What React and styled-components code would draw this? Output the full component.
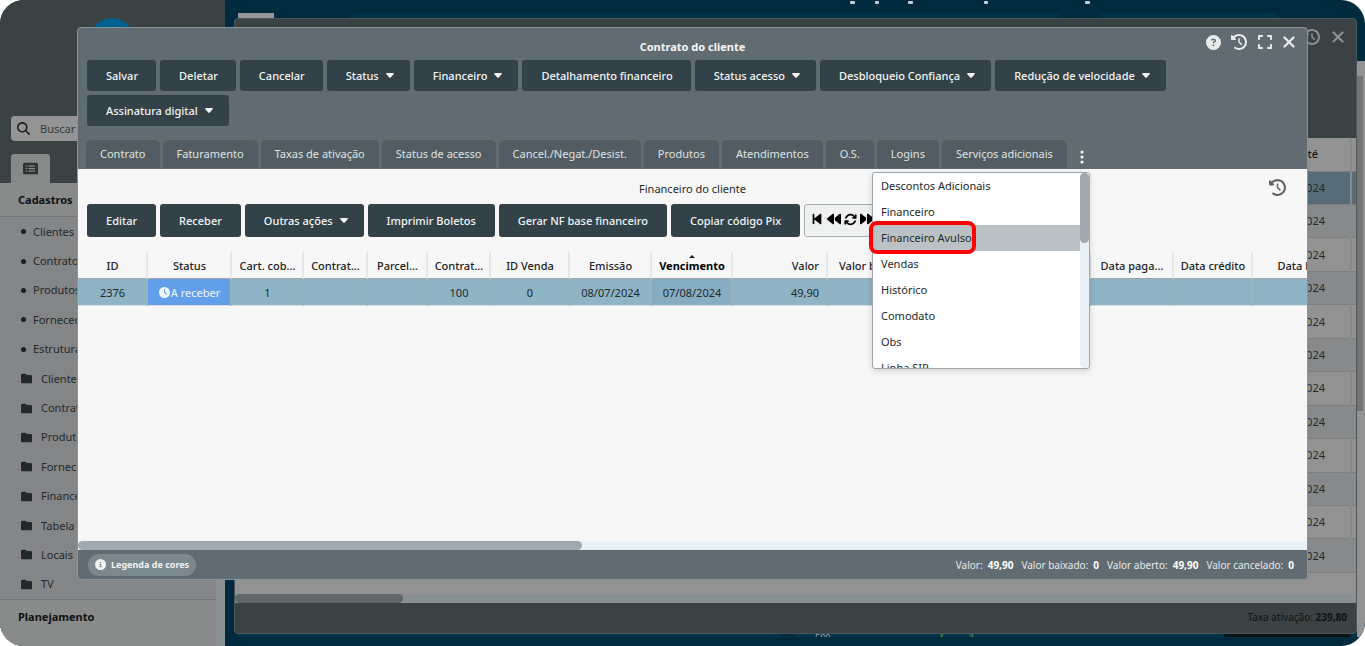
import React from 'react';
import styled, { createGlobalStyle } from 'styled-components';
import {
    FaArrowsRotate,
    FaBackward,
    FaBackwardStep,
    FaCircleInfo,
    FaCircleQuestion,
    FaClock,
    FaClockRotateLeft,
    FaExpand,
    FaFolder,
    FaForward,
    FaForwardStep,
    FaMagnifyingGlass,
    FaRectangleList,
} from 'react-icons/fa6';

const menuLinks = ['Clientes', 'Contratos', 'Produtos', 'Fornecedores', 'Estrutura'];
const menuFolders = ['Clientes', 'Contratos', 'Produtos', 'Fornecedores', 'Financeiro', 'Tabela', 'Locais', 'TV'];

const contractActions = [
    { label: 'Salvar' },
    { label: 'Deletar' },
    { label: 'Cancelar' },
    { label: 'Status', menu: true },
    { label: 'Financeiro', menu: true },
    { label: 'Detalhamento financeiro' },
    { label: 'Status acesso', menu: true },
    { label: 'Desbloqueio Confiança', menu: true },
    { label: 'Redução de velocidade', menu: true },
    { label: 'Assinatura digital', menu: true },
];

const financeActions = [
    { label: 'Editar' },
    { label: 'Receber' },
    { label: 'Outras ações', menu: true },
    { label: 'Imprimir Boletos' },
    { label: 'Gerar NF base financeiro' },
    { label: 'Copiar código Pix' },
];

const tabs = [
    'Contrato', 'Faturamento', 'Taxas de ativação', 'Status de acesso', 'Cancel./Negat./Desist.',
    'Produtos', 'Atendimentos', 'O.S.', 'Logins', 'Serviços adicionais',
];

const moreTabs = [
    'Descontos Adicionais', 'Financeiro', 'Financeiro Avulso', 'Vendas',
    'Histórico', 'Comodato', 'Obs', 'Linha SIP',
];

const columns = [
    { label: 'ID', width: 70, value: '2376' },
    { label: 'Status', width: 84, status: true, value: 'A receber' },
    { label: 'Cart. cob...', width: 72, value: '1' },
    { label: 'Contrat...', width: 64, value: '' },
    { label: 'Parcel...', width: 60, value: '' },
    { label: 'Contrat...', width: 63, value: '100' },
    { label: 'ID Venda', width: 79, value: '0' },
    { label: 'Emissão', width: 82, value: '08/07/2024' },
    { label: 'Vencimento', width: 81, value: '07/08/2024', sorted: true },
    { label: 'Valor', width: 95, value: '49,90', align: 'right' },
    { label: 'Valor baixado', width: 92, value: '', align: 'right' },
    { label: '', width: 91, value: '' },
    { label: '', width: 80, value: '' },
    { label: 'Data paga...', width: 83, value: '' },
    { label: 'Data crédito', width: 79, value: '' },
    { label: 'Data baixa', width: 106, value: '' },
];

const totals = [
    ['Valor:', '49,90'],
    ['Valor baixado:', '0'],
    ['Valor aberto:', '49,90'],
    ['Valor cancelado:', '0'],
];

const GlobalStyle = createGlobalStyle`
    * { box-sizing: border-box; }
    body {
        margin: 0;
        background: #fff;
        font-family: 'Noto Sans', 'Open Sans', sans-serif;
        font-size: 11px;
        line-height: 16px;
        color: #21292c;
    }
    button, input {
        font: inherit;
        color: inherit;
        border: 0;
        margin: 0;
        padding: 0;
        background: none;
    }
    ul { list-style: none; margin: 0; padding: 0; }
    h1, h2 { margin: 0; font-size: 11px; line-height: 16px; }
    a { color: inherit; text-decoration: none; }
    svg { display: block; }
`;

const Page = styled.div`
    position: relative;
    display: flex;
    min-height: 100vh;
    overflow: hidden;
    border-radius: 24px;
    background: #002a3e;
`;

const Sidebar = styled.aside`
    display: flex;
    flex-direction: column;
    flex: 0 0 225px;
    background: #3b4244;
`;

const Brand = styled.div`
    height: 116px;
    padding: 18px 0 0 90px;
`;

const BrandMark = styled.div`
    width: 44px;
    height: 44px;
    border-radius: 50%;
    background: #00618e;
`;

const Search = styled.label`
    display: flex;
    align-items: center;
    gap: 10px;
    height: 25px;
    margin: 0 11px;
    padding: 0 6px;
    border-radius: 4px;
    background: #949494;
    color: #1a2123;

    input {
        min-width: 0;
        flex: 1;
        &::placeholder { color: #32393b; opacity: 1; }
    }
`;

const MenuTab = styled.button`
    display: flex;
    align-items: center;
    justify-content: center;
    width: 39px;
    height: 29px;
    margin: 13px 0 0 11px;
    border-radius: 3px 3px 0 0;
    background: #878a89;
    color: #2c3335;
`;

const MenuBody = styled.nav`
    display: flex;
    flex-direction: column;
    flex: 1;
    padding-right: 9px;
    background: #8a9193;
`;

const MenuTitle = styled.h2`
    height: ${({ $tall }) => ($tall ? 47 : 34)}px;
    padding: 9px 18px;
    background: #898b8a;
    color: #0d1112;
    border-${({ $tall }) => ($tall ? 'top' : 'bottom')}: 1px solid #737678;
`;

const MenuList = styled.ul`
    display: flex;
    flex-direction: column;
    flex: 1;
    background: #848587;
`;

const MenuItem = styled.li`
    display: flex;
    flex: 1;

    a {
        display: flex;
        align-items: center;
        gap: ${({ $folder }) => ($folder ? 9 : 7)}px;
        padding-left: 21px;
    }
`;

const Bullet = styled.span`
    width: 5px;
    height: 5px;
    border-radius: 50%;
    background: #182022;
`;

const Dashboard = styled.main`
    position: relative;
    display: flex;
    flex: 1;
    flex-direction: column;
    justify-content: space-between;
    padding: 13px 8px 9px 13px;
`;

const DashRow = styled.div`
    display: flex;
    gap: 26px;
    height: 30px;
    padding-right: 73px;
`;

const DashChip = styled.div`
    width: 36px;
    height: 10px;
    margin-right: 44px;
    background: #969696;
`;

const DashCard = styled.div`
    flex: ${({ $grow }) => $grow};
    border-radius: 18px;
    background: #00334a;
`;

const ChartStrip = styled.div`
    display: flex;
    height: 8px;
    background: #00334a;
    overflow: hidden;

    svg { width: 100%; height: 8px; }
`;

const TopMarks = styled.svg`
    position: absolute;
    top: 0;
    left: 620px;
`;

const PageScroll = styled.div`
    position: absolute;
    top: 61px;
    right: 0;
    bottom: 9px;
    width: 8px;
    padding: 15px 2px 15px 0;
    background: #929292;
`;

const PageThumb = styled.div`
    height: 335px;
    background: #747474;
`;

const Window = styled.section`
    position: absolute;
    display: flex;
    flex-direction: column;
    overflow: hidden;
    border: 1px solid ${({ $back }) => ($back ? '#4d5557' : '#87949a')};
    border-radius: 4px;
    background: ${({ $back }) => ($back ? '#3b4244' : '#606c72')};
    inset: ${({ $back }) => ($back ? '18px 8px 12px 234px' : '27px 57px 66px 77px')};
`;

const WindowTools = styled.div`
    position: absolute;
    top: ${({ $back }) => ($back ? 10 : 6)}px;
    right: 12px;
    display: flex;
    align-items: center;
    gap: ${({ $back }) => ($back ? 12 : 10)}px;
    color: ${({ $back }) => ($back ? '#8c9192' : '#e9ecec')};
`;

const BackHeader = styled.div`
    height: 119px;
    flex: none;
`;

const BackBody = styled.div`
    flex: 1;
    overflow: hidden;
    background: #929292;
`;

const BackTable = styled.table`
    width: 100%;
    height: 435px;
    table-layout: fixed;
    border-collapse: collapse;

    th, td {
        padding: 0 25px;
        text-align: right;
        border-bottom: 1px solid #7c7e80;
        border-right: 2px solid #868889;
    }
    th { padding-right: 32px; height: 33px; font-weight: 500; color: #0f1415; }
    th:last-child, td:last-child { padding: 0; width: 5px; border-right: 0; }
    tbody tr:nth-child(even) { background: #88898b; }
    tbody tr:first-child { background: #566d79; }
`;

const ScrollTrack = styled.div`
    flex: none;
    height: 9px;
    background: ${({ $back }) => ($back ? '#899093' : '#e8f1f5')};
`;

const ScrollThumb = styled.div`
    width: ${({ $width }) => $width}%;
    height: 9px;
    border-radius: 5px;
    background: ${({ $back }) => ($back ? '#616668' : '#a0a9b0')};
`;

const BackFooter = styled.footer`
    flex: none;
    height: 30px;
    padding: 6px 9px;
    text-align: right;
    font-size: 10px;
    color: #0f1415;
`;

const WindowTitle = styled.h1`
    padding: 11px 0 5px;
    text-align: center;
    color: #f4f6f6;
`;

const Toolbar = styled.div`
    display: flex;
    flex-wrap: wrap;
    gap: 4px;
    padding: 0 ${({ $wide }) => ($wide ? 120 : 9)}px 0 9px;
`;

const ActionButton = styled.button`
    display: flex;
    align-items: center;
    gap: 7px;
    height: ${({ $tall }) => ($tall ? 33 : 31)}px;
    padding-left: 19px;
    padding-right: ${({ $menu, $tall }) => ($menu ? 16 : $tall ? 19 : 18)}px;
    border-radius: 3px;
    background: #324248;
    color: #f2f4f4;
    font-weight: 500;
    white-space: nowrap;
`;

const Tabs = styled.div`
    display: flex;
    gap: 3px;
    padding: 14px 8px 0;
`;

const Tab = styled.button`
    height: 28px;
    padding: 0 14px;
    margin-bottom: 1px;
    border-radius: 5px 5px 0 0;
    background: #515d62;
    color: #dfe3e4;
    white-space: nowrap;
`;

const MoreButton = styled.button`
    display: flex;
    align-items: center;
    justify-content: center;
    width: 24px;
    height: 28px;
    padding-top: 5px;
`;

const Content = styled.div`
    position: relative;
    display: flex;
    flex: 1;
    flex-direction: column;
    min-height: 0;
    background: #f7f7f7;
`;

const ContentTitle = styled.h2`
    padding: 12px 0 7px;
    text-align: center;
    font-weight: 400;
`;

const HistoryButton = styled.button`
    position: absolute;
    top: 10px;
    right: 21px;
    color: #606668;
`;

const Pager = styled.div`
    display: flex;
    align-items: center;
    gap: 3px;
    height: 33px;
    width: 160px;
    padding: 0 5px 3px;
    border: 1px solid #a4adb2;
    border-radius: 3px;
    background: #eff1f1;
    color: #000;
`;

const TableArea = styled.div`
    flex: 1;
    overflow: hidden;
    padding-top: 15px;
`;

const FinanceTable = styled.table`
    width: 1281px;
    table-layout: fixed;
    border-collapse: separate;
    border-spacing: 0;
`;

const HeadCell = styled.th`
    position: relative;
    height: 27px;
    padding: 2px ${({ $align }) => ($align ? 7 : 5)}px 0 6px;
    text-align: ${({ $align }) => $align || 'center'};
    white-space: nowrap;
    font-weight: ${({ $sorted }) => ($sorted ? 700 : 500)};
    color: ${({ $sorted }) => ($sorted ? '#000' : '#1b2224')};
    border-right: 2px solid #e5e7e7;
    border-bottom: 1px solid #9ca6aa;
`;

const SortMark = styled.span`
    position: absolute;
    top: 3px;
    left: 50%;
    margin-left: -3px;
    border: 3px solid transparent;
    border-top: 0;
    border-bottom-color: #1b2224;
`;

const DataCell = styled.td`
    height: 27px;
    padding: 1px ${({ $align }) => ($align ? 7 : 5)}px 0 6px;
    text-align: ${({ $align }) => $align || 'center'};
    white-space: nowrap;
    color: ${({ $status }) => ($status ? '#f2f7fd' : '#21292c')};
    background: ${({ $status, $sorted }) => ($status ? '#629fea' : $sorted ? '#87adc2' : '#8eb4c6')};
    border-right: 2px solid #97b5c1;
    border-bottom: 1px solid #d5dfe4;
`;

const StatusLabel = styled.span`
    display: flex;
    align-items: center;
    justify-content: center;
    gap: 1px;
`;

const WindowFooter = styled.footer`
    display: flex;
    align-items: center;
    flex: none;
    height: 29px;
    padding: 0 13px 0 10px;
    color: #e6e9ea;
`;

const LegendButton = styled.button`
    display: flex;
    align-items: center;
    gap: 5px;
    height: 22px;
    padding: 0 7px;
    border-radius: 11px;
    background: #7b888e;
    color: #f2f4f4;
    font-size: 9px;
    font-weight: 700;
`;

const Totals = styled.div`
    display: flex;
    gap: 8px;
    margin-left: auto;
    font-size: 10px;

    strong { margin-left: 5px; color: #fff; }
`;

const TabMenu = styled.div`
    position: absolute;
    top: 3px;
    right: 217px;
    display: flex;
    width: 218px;
    height: 197px;
    overflow: hidden;
    border: 1px solid #9ba5ab;
    border-radius: 3px;
    background: #fff;
    box-shadow: 0 2px 6px rgba(0, 0, 0, 0.15);

    ul { flex: 1; }
`;

const TabMenuItem = styled.li`
    button {
        display: block;
        width: 100%;
        height: 26px;
        padding: 0 8px;
        text-align: left;
        background: ${({ $active }) => ($active ? '#bbc2c5' : 'transparent')};
    }
`;

const MenuScroll = styled.div`
    width: 9px;
    border-radius: 5px;
    background: #e8f1f5;
`;

const MenuThumb = styled.div`
    height: 70px;
    border-radius: 5px;
    background: #a0a9b0;
`;

const Highlight = styled.div`
    position: absolute;
    top: 52px;
    right: 331px;
    width: 107px;
    height: 33px;
    border: 4px solid #fe0000;
    border-radius: 8px;
    pointer-events: none;
`;

const Caret = () => (
    <svg width="8" height="5" viewBox="0 0 8 5" fill="currentColor">
        <path d="M1 0h6c.8 0 1.2.8.7 1.3L4.7 4.6a1 1 0 0 1-1.4 0L.3 1.3C-.2.8.2 0 1 0z" />
    </svg>
);

const Close = () => (
    <svg width="12" height="12" viewBox="0 0 12 12" stroke="currentColor" strokeWidth="2.2" strokeLinecap="round">
        <path d="M1.5 1.5l9 9M10.5 1.5l-9 9" />
    </svg>
);

const Action = ({ label, menu, tall }) => (
    <ActionButton type="button" $tall={tall} $menu={menu}>
        {label}
        {menu && <Caret />}
    </ActionButton>
);

const SideMenu = () => (
    <Sidebar>
        <Brand><BrandMark /></Brand>
        <Search>
            <FaMagnifyingGlass size={13} />
            <input type="text" placeholder="Buscar no menu" aria-label="Buscar no menu" />
        </Search>
        <MenuTab type="button" aria-label="Menu"><FaRectangleList size={15} /></MenuTab>
        <MenuBody>
            <MenuTitle>Cadastros</MenuTitle>
            <MenuList>
                {menuLinks.map((label) => (
                    <MenuItem key={label}><a href="#"><Bullet />{label}</a></MenuItem>
                ))}
                {menuFolders.map((label) => (
                    <MenuItem key={label} $folder><a href="#"><FaFolder size={11} />{label}</a></MenuItem>
                ))}
            </MenuList>
            <MenuTitle $tall>Planejamento</MenuTitle>
        </MenuBody>
    </Sidebar>
);

const DashboardBack = () => (
    <Dashboard>
        <DashRow>
            <DashChip />
            <DashCard $grow={72} />
            <DashCard $grow={19} />
        </DashRow>
        <TopMarks width="260" height="4" fill="#c9ced0">
            <rect x="5" y="1" width="5" height="3" rx="1" />
            <rect x="30" y="1" width="4" height="3" rx="1" />
            <rect x="63" y="1" width="5" height="3" rx="1" />
            <rect x="139" y="1" width="4" height="3" rx="1" />
            <rect x="240" y="1" width="5" height="3" rx="1" />
        </TopMarks>
        <ChartStrip>
            <svg>
                <rect x="544" y="0" width="12" height="8" fill="#002a3e" />
                <text x="577" y="12" fontSize="9" fill="#a0aab0">500</text>
                <path d="M703 8l2-4M735 8l-2-4" stroke="#2f8a2f" strokeWidth="2" />
                <path d="M732 8l-1-4" stroke="#7a2f6a" />
                <rect x="985" y="0" width="128" height="8" rx="4" fill="#0c1214" />
            </svg>
        </ChartStrip>
    </Dashboard>
);

const ClientWindow = () => (
    <Window $back>
        <WindowTools $back>
            <button type="button" aria-label="Histórico"><FaClockRotateLeft size={16} /></button>
            <button type="button" aria-label="Fechar"><Close /></button>
        </WindowTools>
        <BackHeader />
        <BackBody>
            <BackTable>
                <thead>
                    <tr><th>Ativo até</th><th aria-hidden="true" /></tr>
                </thead>
                <tbody>
                    {Array.from({ length: 12 }, (_, i) => (
                        <tr key={i}><td>01/07/2024</td><td /></tr>
                    ))}
                </tbody>
            </BackTable>
        </BackBody>
        <ScrollTrack $back><ScrollThumb $back $width={15} /></ScrollTrack>
        <BackFooter>Taxa ativação: <strong>239,80</strong></BackFooter>
    </Window>
);

const FinanceGrid = () => (
    <TableArea>
        <FinanceTable>
            <colgroup>
                {columns.map((col, i) => <col key={i} style={{ width: col.width }} />)}
            </colgroup>
            <thead>
                <tr>
                    {columns.map((col, i) => (
                        <HeadCell key={i} $align={col.align} $sorted={col.sorted}>
                            {col.sorted && <SortMark />}
                            {col.label}
                        </HeadCell>
                    ))}
                </tr>
            </thead>
            <tbody>
                <tr>
                    {columns.map((col, i) => (
                        <DataCell key={i} $align={col.align} $status={col.status} $sorted={col.sorted}>
                            {col.status ? <StatusLabel><FaClock size={11} />{col.value}</StatusLabel> : col.value}
                        </DataCell>
                    ))}
                </tr>
            </tbody>
        </FinanceTable>
    </TableArea>
);

const ContractWindow = () => (
    <Window>
        <WindowTools>
            <button type="button" aria-label="Ajuda"><FaCircleQuestion size={15} /></button>
            <button type="button" aria-label="Histórico"><FaClockRotateLeft size={16} /></button>
            <button type="button" aria-label="Expandir"><FaExpand size={16} /></button>
            <button type="button" aria-label="Fechar"><Close /></button>
        </WindowTools>
        <WindowTitle>Contrato do cliente</WindowTitle>
        <Toolbar $wide>
            {contractActions.map((action) => <Action key={action.label} {...action} />)}
        </Toolbar>
        <Tabs>
            {tabs.map((label) => <Tab key={label} type="button">{label}</Tab>)}
            <MoreButton type="button" aria-label="Mais abas">
                <svg width="4" height="14" fill="#f4f6f6">
                    <circle cx="2" cy="2" r="1.6" />
                    <circle cx="2" cy="7" r="1.6" />
                    <circle cx="2" cy="12" r="1.6" />
                </svg>
            </MoreButton>
        </Tabs>
        <Content>
            <ContentTitle>Financeiro do cliente</ContentTitle>
            <HistoryButton type="button" aria-label="Histórico do financeiro">
                <FaClockRotateLeft size={17} />
            </HistoryButton>
            <Toolbar>
                {financeActions.map((action) => <Action key={action.label} {...action} tall />)}
                <Pager>
                    <button type="button" aria-label="Primeira"><FaBackwardStep size={14} /></button>
                    <button type="button" aria-label="Anterior"><FaBackward size={14} /></button>
                    <button type="button" aria-label="Atualizar"><FaArrowsRotate size={13} /></button>
                    <button type="button" aria-label="Próxima"><FaForward size={14} /></button>
                    <button type="button" aria-label="Última"><FaForwardStep size={14} /></button>
                </Pager>
            </Toolbar>
            <FinanceGrid />
            <ScrollTrack><ScrollThumb $width={41} /></ScrollTrack>
            <TabMenu>
                <ul>
                    {moreTabs.map((label) => (
                        <TabMenuItem key={label} $active={label === 'Financeiro Avulso'}>
                            <button type="button">{label}</button>
                        </TabMenuItem>
                    ))}
                </ul>
                <MenuScroll><MenuThumb /></MenuScroll>
            </TabMenu>
            <Highlight />
        </Content>
        <WindowFooter>
            <LegendButton type="button"><FaCircleInfo size={11} />Legenda de cores</LegendButton>
            <Totals>
                {totals.map(([label, value]) => (
                    <span key={label}>{label}<strong>{value}</strong></span>
                ))}
            </Totals>
        </WindowFooter>
    </Window>
);

const App = () => (
    <>
        <GlobalStyle />
        <Page>
            <SideMenu />
            <DashboardBack />
            <PageScroll><PageThumb /></PageScroll>
            <ClientWindow />
            <ContractWindow />
        </Page>
    </>
);

export default App;
